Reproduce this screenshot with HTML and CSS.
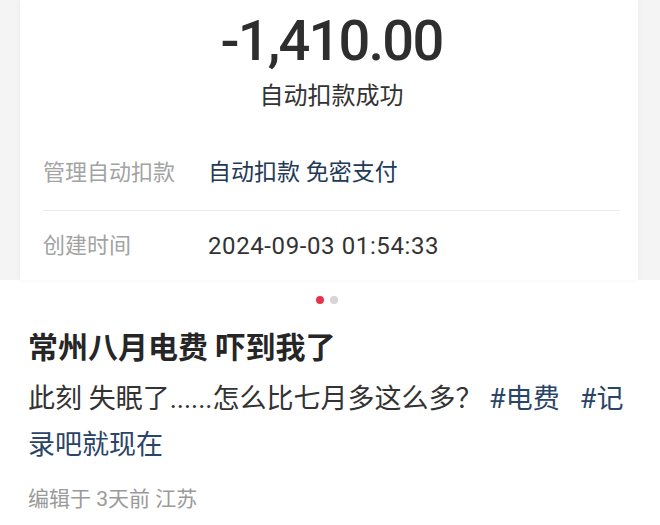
FILE: index.html
```html
<!DOCTYPE html>
<html lang="zh-CN">
<head>
    <meta charset="UTF-8" />
    <meta name="viewport" content="width=device-width, initial-scale=1.0" />
    <title>自动扣款成功</title>
    <link rel="stylesheet" href="styles.css">
</head>
<body>
    <section class="bill-shot">
        <div class="bill-card">
            <div class="amount">-1,410.00</div>
            <div class="status">自动扣款成功</div>
            <div class="rows">
                <div class="row">
                    <span class="row-label">管理自动扣款</span>
                    <span class="row-value link">自动扣款 免密支付</span>
                </div>
                <div class="row">
                    <span class="row-label">创建时间</span>
                    <span class="row-value date">2024-09-03 01:54:33</span>
                </div>
            </div>
        </div>
    </section>

    <div class="dots">
        <span class="dot active"></span>
        <span class="dot"></span>
    </div>

    <article class="post">
        <h1>常州八月电费 吓到我了</h1>
        <p class="post-body">此刻 失眠了......怎么比七月多这么多？ <a class="tag" href="#">#电费</a>&nbsp;&nbsp; <a class="tag" href="#">#记录吧就现在</a></p>
        <p class="post-meta">编辑于 3天前 江苏</p>
    </article>
</body>
</html>
```

FILE: styles.css
```css
body {
    font-family: Roboto, "Noto Sans CJK SC", sans-serif;
    margin: 0;
    padding: 0;
    background-color: #ffffff;
    color: #333;
}

/* screenshot of the payment bill */
.bill-shot {
    background-color: #f4f4f4;
    padding: 0 22px 0 20px;
}

.bill-card {
    background-color: #ffffff;
    height: 280px;
    box-sizing: border-box;
    padding: 9px 18px 0 23px;
    box-shadow: 0 0 6px rgba(0, 0, 0, 0.04);
}

.amount {
    font-size: 56px;
    line-height: 64px;
    font-weight: 500;
    color: #2e2e2e;
    text-align: center;
    letter-spacing: -1.8px;
}

.status {
    font-size: 24px;
    line-height: 24px;
    color: #333;
    text-align: center;
    margin-top: 11px;
}

.rows {
    margin-top: 28px;
}

.row {
    display: flex;
    align-items: center;
    height: 74px;
    font-size: 22px;
    line-height: 30px;
}

.row + .row {
    border-top: 1px solid #ececec;
    height: 70px;
}

.row-label {
    width: 165px;
    flex-shrink: 0;
    color: #a3a3a3;
}

.row-value {
    color: #333;
}

.row-value.link {
    color: #223a56;
    font-size: 23px;
}

.row-value.date {
    font-size: 24px;
    letter-spacing: 0.6px;
}

/* carousel indicator */
.dots {
    display: flex;
    justify-content: center;
    gap: 6px;
    margin: 16px 0 0 -7px;
}

.dot {
    width: 8px;
    height: 8px;
    border-radius: 50%;
    background-color: #d6d6d6;
}

.dot.active {
    background-color: #e8324a;
}

/* post text */
.post {
    padding: 0 20px 0 28px;
}

.post h1 {
    font-size: 30px;
    line-height: 36px;
    font-weight: 700;
    color: #262626;
    margin: 26px 0 0;
}

.post-body {
    font-size: 27px;
    line-height: 46px;
    color: #333;
    margin: 10px 0 0;
}

.tag {
    color: #2a4567;
    text-decoration: none;
}

.post-meta {
    font-size: 21px;
    line-height: 28px;
    color: #9a9a9a;
    margin: 17px 0 0;
}
```
